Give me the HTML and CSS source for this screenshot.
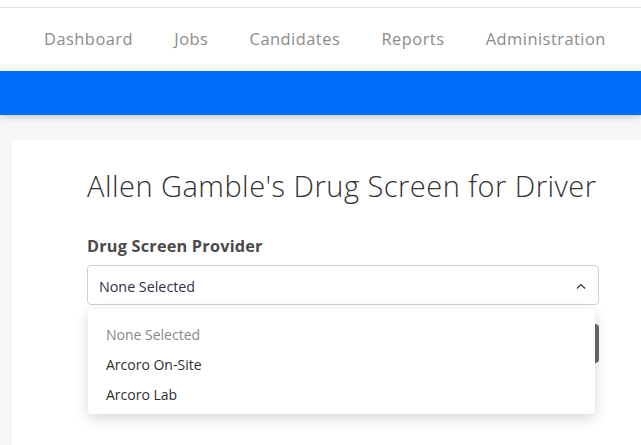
FILE: index.html
```html
<!DOCTYPE html>
<html>
<head>
<meta charset="utf-8">
<link rel="stylesheet" href="styles.css">
</head>
<body>
<div class="topline"></div>
<nav class="nav">
  <a class="nav-item">Dashboard</a>
  <a class="nav-item">Jobs</a>
  <a class="nav-item">Candidates</a>
  <a class="nav-item">Reports</a>
  <a class="nav-item">Administration</a>
</nav>
<div class="banner"></div>
<main class="main">
  <section class="card">
    <h1 class="title">Allen Gamble's Drug Screen for Driver</h1>
    <div class="field">
      <label class="label">Drug Screen Provider</label>
      <div class="select">
        <span class="select-value">None Selected</span>
        <svg class="chevron" width="10" height="6" viewBox="0 0 10 6"><path d="M1 5.5 L5 1.5 L9 5.5" fill="none" stroke="#333" stroke-width="1.2"/></svg>
      </div>
      <div class="under">
        <div class="btn"></div>
      </div>
      <ul class="menu">
        <li class="menu-item muted">None Selected</li>
        <li class="menu-item">Arcoro On-Site</li>
        <li class="menu-item">Arcoro Lab</li>
      </ul>
    </div>
  </section>
</main>
</body>
</html>
```
FILE: styles.css
```css
html, body {
  margin: 0;
  padding: 0;
}
body {
  background: #f5f6f8;
  font-family: "Open Sans", "Noto Sans", sans-serif;
  width: 641px;
  height: 445px;
  overflow: hidden;
}
.topline {
  height: 7px;
  background: #fff;
  border-bottom: 1px solid #e2e2e2;
}
.nav {
  height: 63px;
  background: #fff;
  display: flex;
  align-items: center;
  padding-left: 24px;
  padding-bottom: 2px;
  box-sizing: border-box;
}
.nav-item {
  padding: 0 20.6px;
  font-size: 16.4px;
  letter-spacing: 0.5px;
  color: #8b8b8b;
  line-height: 20px;
}
.nav-item:first-child {
  padding-left: 20px;
}
.banner {
  height: 44px;
  background: #006cf8;
  box-shadow: 0 2px 6px rgba(0,0,0,0.18);
  position: relative;
}
.main {
  padding: 25px 0 0 12px;
}
.card {
  background: #fff;
  height: 320px;
  padding: 26px 0 0 75px;
  box-sizing: border-box;
}
.title {
  margin: 0;
  font-weight: 300;
  font-size: 29px;
  line-height: 40px;
  color: #333;
  letter-spacing: 0.48px;
}
.field {
  position: relative;
  width: 512px;
  margin-top: 30px;
}
.label {
  display: block;
  font-weight: 700;
  font-size: 16.3px;
  letter-spacing: 0.2px;
  line-height: 20px;
  color: #4a4a4a;
  margin-bottom: 9px;
}
.select {
  height: 40px;
  border: 1px solid #cfcfcf;
  border-radius: 4px;
  box-sizing: border-box;
  display: flex;
  align-items: center;
  justify-content: space-between;
  padding: 2px 12px 0 11px;
}
.select-value {
  font-size: 14.3px;
  color: #33304a;
}
.chevron {
  display: block;
}
.under {
  display: flex;
  justify-content: flex-end;
  padding-top: 19px;
}
.btn {
  width: 40px;
  height: 39px;
  background: #6b6b6b;
  border-radius: 4px;
}
.menu {
  position: absolute;
  left: 1px;
  top: 73px;
  width: 507px;
  margin: 0;
  padding: 11px 0 4px;
  list-style: none;
  background: #fff;
  border-radius: 4px;
  box-shadow: 0 4px 14px rgba(0,0,0,0.16);
}
.menu-item {
  font-size: 14px;
  line-height: 30px;
  padding-left: 18px;
  color: #2e2e2e;
}
.menu-item.muted {
  color: #888;
}
```
